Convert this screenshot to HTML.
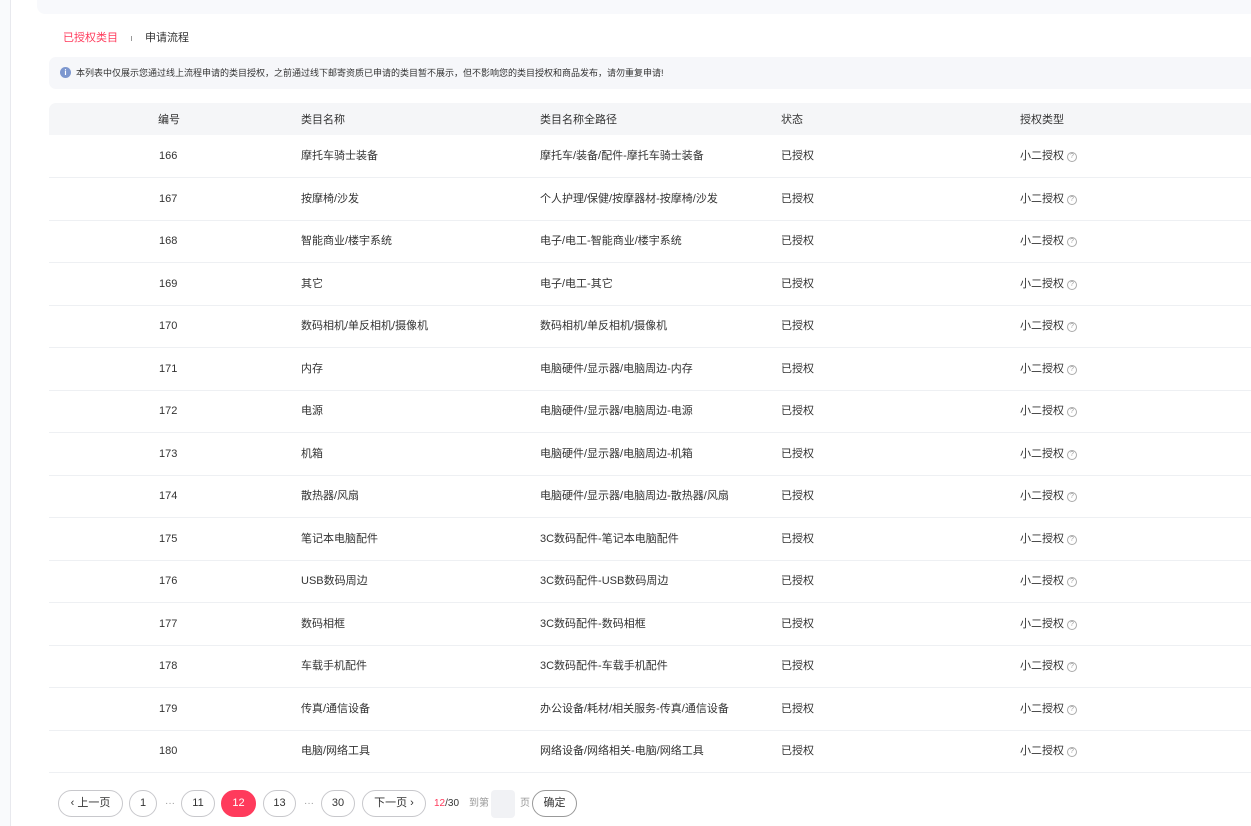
<!DOCTYPE html>
<html><head><meta charset="utf-8"><style>
*{margin:0;padding:0;box-sizing:border-box}
body{width:1251px;height:826px;overflow:hidden;background:#fff;font-family:"Liberation Sans","Noto Sans CJK SC",sans-serif;font-size:11px;color:#333;position:relative}
.side{position:absolute;left:0;top:0;width:11px;height:826px;background:#f9fafc;border-right:1px solid #e8e9ee}
.topcard{position:absolute;left:37px;top:-10px;width:1230px;height:24px;background:#f8f9fc;border-radius:8px}
.tabs{position:absolute;left:63px;top:31px;font-size:11px;line-height:15px}
.tabs .a{color:#ff3b5c}
.tabs .sep{display:inline-block;width:1px;height:5px;background:#999;margin:0 13px 0 13px;vertical-align:middle}
.notice{position:absolute;left:49px;top:57px;width:1220px;height:32px;background:#f6f7fa;border-radius:7px;font-size:9px;color:#333;line-height:32px;padding-left:27px}
.notice i{position:absolute;left:11px;top:10px;width:11px;height:11px;border-radius:50%;background:#7d97cf;color:#fff;font-style:normal;font-size:8px;line-height:11px;text-align:center;font-weight:bold}
.thead{position:absolute;left:49px;top:103px;width:1210px;height:32px;background:#f5f6f8;border-radius:7px 0 0 0}
.row{position:absolute;left:49px;width:1210px;height:43px;border-bottom:1px solid #eef0f3}
.c{position:absolute;top:1px;white-space:nowrap}
.thead .c{line-height:32px}
.row .c{line-height:41px}
.q{display:inline-block;width:10px;height:10px;border:1px solid #aaa;border-radius:50%;font-size:7px;line-height:8px;text-align:center;color:#999;margin-left:3px;vertical-align:1px}
.pg{position:absolute;top:790px;height:27px;border:1px solid #c8c8cc;border-radius:14px;line-height:25px;text-align:center;font-size:11px;color:#333;background:#fff}
.dots{position:absolute;top:790px;line-height:27px;font-size:10px;color:#999}
</style></head><body>
<div class="side"></div>
<div class="topcard"></div>
<div class="tabs"><span class="a">已授权类目</span><span class="sep"></span><span>申请流程</span></div>
<div class="notice"><i>i</i>本列表中仅展示您通过线上流程申请的类目授权，之前通过线下邮寄资质已申请的类目暂不展示，但不影响您的类目授权和商品发布，请勿重复申请!</div>
<div class="thead"><div class="c" style="left:109px">编号</div><div class="c" style="left:252px">类目名称</div><div class="c" style="left:491px">类目名称全路径</div><div class="c" style="left:732px">状态</div><div class="c" style="left:971px">授权类型</div></div>
<div class="row" style="top:135px"><div class="c" style="left:110px">166</div><div class="c" style="left:252px">摩托车骑士装备</div><div class="c" style="left:491px">摩托车/装备/配件-摩托车骑士装备</div><div class="c" style="left:732px">已授权</div><div class="c" style="left:971px">小二授权<span class="q">?</span></div></div>
<div class="row" style="top:177.5px"><div class="c" style="left:110px">167</div><div class="c" style="left:252px">按摩椅/沙发</div><div class="c" style="left:491px">个人护理/保健/按摩器材-按摩椅/沙发</div><div class="c" style="left:732px">已授权</div><div class="c" style="left:971px">小二授权<span class="q">?</span></div></div>
<div class="row" style="top:220px"><div class="c" style="left:110px">168</div><div class="c" style="left:252px">智能商业/楼宇系统</div><div class="c" style="left:491px">电子/电工-智能商业/楼宇系统</div><div class="c" style="left:732px">已授权</div><div class="c" style="left:971px">小二授权<span class="q">?</span></div></div>
<div class="row" style="top:262.5px"><div class="c" style="left:110px">169</div><div class="c" style="left:252px">其它</div><div class="c" style="left:491px">电子/电工-其它</div><div class="c" style="left:732px">已授权</div><div class="c" style="left:971px">小二授权<span class="q">?</span></div></div>
<div class="row" style="top:305px"><div class="c" style="left:110px">170</div><div class="c" style="left:252px">数码相机/单反相机/摄像机</div><div class="c" style="left:491px">数码相机/单反相机/摄像机</div><div class="c" style="left:732px">已授权</div><div class="c" style="left:971px">小二授权<span class="q">?</span></div></div>
<div class="row" style="top:347.5px"><div class="c" style="left:110px">171</div><div class="c" style="left:252px">内存</div><div class="c" style="left:491px">电脑硬件/显示器/电脑周边-内存</div><div class="c" style="left:732px">已授权</div><div class="c" style="left:971px">小二授权<span class="q">?</span></div></div>
<div class="row" style="top:390px"><div class="c" style="left:110px">172</div><div class="c" style="left:252px">电源</div><div class="c" style="left:491px">电脑硬件/显示器/电脑周边-电源</div><div class="c" style="left:732px">已授权</div><div class="c" style="left:971px">小二授权<span class="q">?</span></div></div>
<div class="row" style="top:432.5px"><div class="c" style="left:110px">173</div><div class="c" style="left:252px">机箱</div><div class="c" style="left:491px">电脑硬件/显示器/电脑周边-机箱</div><div class="c" style="left:732px">已授权</div><div class="c" style="left:971px">小二授权<span class="q">?</span></div></div>
<div class="row" style="top:475px"><div class="c" style="left:110px">174</div><div class="c" style="left:252px">散热器/风扇</div><div class="c" style="left:491px">电脑硬件/显示器/电脑周边-散热器/风扇</div><div class="c" style="left:732px">已授权</div><div class="c" style="left:971px">小二授权<span class="q">?</span></div></div>
<div class="row" style="top:517.5px"><div class="c" style="left:110px">175</div><div class="c" style="left:252px">笔记本电脑配件</div><div class="c" style="left:491px">3C数码配件-笔记本电脑配件</div><div class="c" style="left:732px">已授权</div><div class="c" style="left:971px">小二授权<span class="q">?</span></div></div>
<div class="row" style="top:560px"><div class="c" style="left:110px">176</div><div class="c" style="left:252px">USB数码周边</div><div class="c" style="left:491px">3C数码配件-USB数码周边</div><div class="c" style="left:732px">已授权</div><div class="c" style="left:971px">小二授权<span class="q">?</span></div></div>
<div class="row" style="top:602.5px"><div class="c" style="left:110px">177</div><div class="c" style="left:252px">数码相框</div><div class="c" style="left:491px">3C数码配件-数码相框</div><div class="c" style="left:732px">已授权</div><div class="c" style="left:971px">小二授权<span class="q">?</span></div></div>
<div class="row" style="top:645px"><div class="c" style="left:110px">178</div><div class="c" style="left:252px">车载手机配件</div><div class="c" style="left:491px">3C数码配件-车载手机配件</div><div class="c" style="left:732px">已授权</div><div class="c" style="left:971px">小二授权<span class="q">?</span></div></div>
<div class="row" style="top:687.5px"><div class="c" style="left:110px">179</div><div class="c" style="left:252px">传真/通信设备</div><div class="c" style="left:491px">办公设备/耗材/相关服务-传真/通信设备</div><div class="c" style="left:732px">已授权</div><div class="c" style="left:971px">小二授权<span class="q">?</span></div></div>
<div class="row" style="top:730px"><div class="c" style="left:110px">180</div><div class="c" style="left:252px">电脑/网络工具</div><div class="c" style="left:491px">网络设备/网络相关-电脑/网络工具</div><div class="c" style="left:732px">已授权</div><div class="c" style="left:971px">小二授权<span class="q">?</span></div></div>

<div class="pg" style="left:58px;width:65px">‹ 上一页</div>
<div class="pg" style="left:129px;width:28px">1</div>
<div class="dots" style="left:165px">···</div>
<div class="pg" style="left:181px;width:34px">11</div>
<div class="pg" style="left:221px;width:35px;background:#ff3b5c;border-color:#ff3b5c;color:#fff">12</div>
<div class="pg" style="left:263px;width:33px">13</div>
<div class="dots" style="left:304px">···</div>
<div class="pg" style="left:321px;width:34px">30</div>
<div class="pg" style="left:362px;width:64px">下一页 ›</div>
<div class="dots" style="left:434px;color:#333"><span style="color:#ff3b5c">12</span>/30</div>
<div class="dots" style="left:469px">到第</div>
<div style="position:absolute;left:491px;top:790px;width:24px;height:28px;background:#f1f2f5;border-radius:4px"></div>
<div class="dots" style="left:520px">页</div>
<div class="pg" style="left:532px;width:45px;border-color:#999">确定</div>
</body></html>
